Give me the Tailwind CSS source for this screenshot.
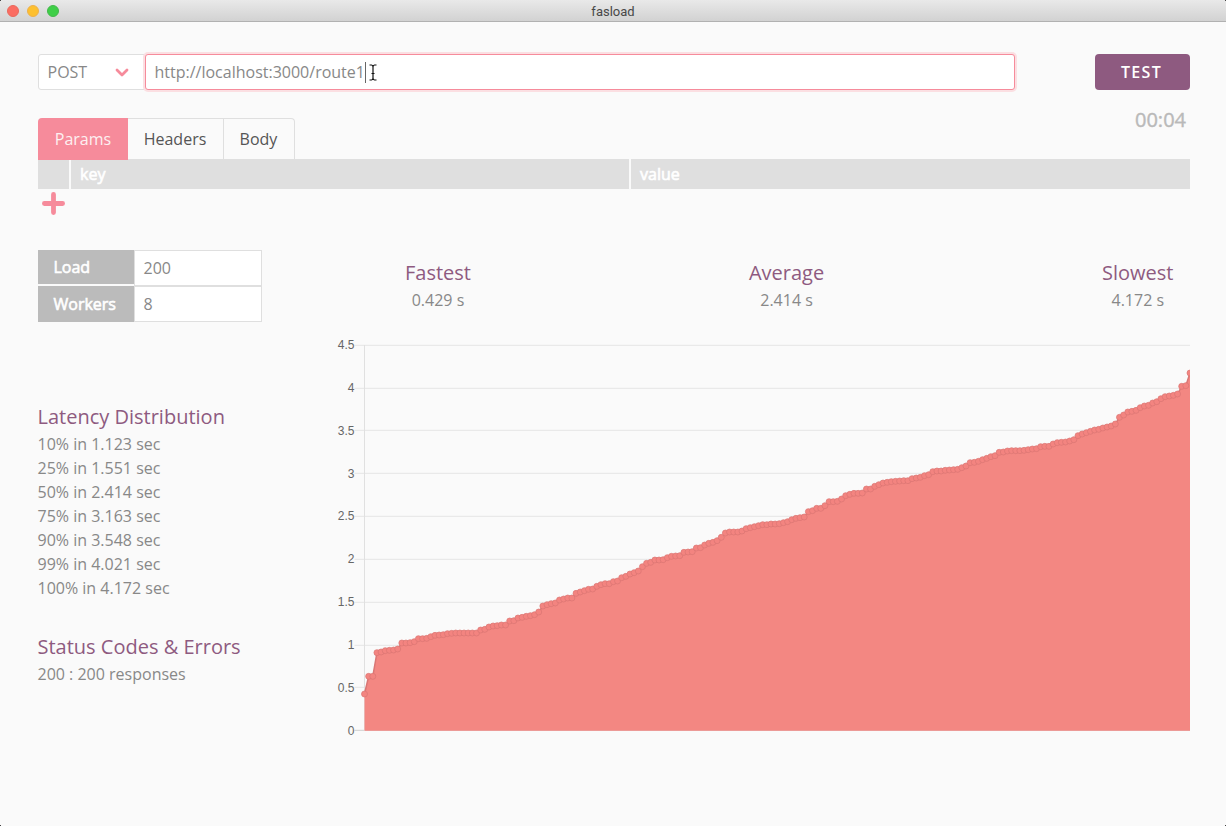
<!DOCTYPE html>
<html lang="en">
<head>
<meta charset="utf-8">
<title>fasload</title>
<script src="https://cdn.jsdelivr.net/npm/@tailwindcss/browser@4"></script>
</head>
<body class="relative w-[1226px] h-[826px] overflow-hidden bg-[#fafafa] font-['Open_Sans',sans-serif] text-base text-[#888] antialiased">
<header class="relative h-[22px] flex items-center justify-center bg-gradient-to-b from-[#e9e9e9] to-[#d2d2d2] border-b border-[#b1b1b1]">
  <div class="absolute left-[7px] top-[5px] flex gap-2">
    <span class="size-3 rounded-full bg-[#fb6d62] border border-[#e9695c]"></span>
    <span class="size-3 rounded-full bg-[#fdc02f] border border-[#eeb04a]"></span>
    <span class="size-3 rounded-full bg-[#3fcf48] border border-[#44b84b]"></span>
  </div>
  <span class="font-['Roboto',sans-serif] text-[13px] text-[#484848] mt-[3px]">fasload</span>
</header>
<main class="px-[38px] pr-9 pt-8">
  <div class="flex h-9">
    <div class="w-[107px] flex items-center justify-between rounded-l-[3px] border border-[#dfdfdf] bg-white pl-[8.5px] pr-[15px]">
      <span>POST</span>
      <svg class="w-[14px] h-[9px]" viewBox="0 0 14 9" fill="none" stroke="#f68b9b" stroke-width="2.8" stroke-linecap="round" stroke-linejoin="round"><path d="M2 2l5 5 5-5"/></svg>
    </div>
    <div class="w-[870px] flex items-center rounded-[3px] border border-[#f68b9b] bg-white pl-[8.5px] shadow-[0_0_0_2px_#fbdfe2]">
      <span>http://localhost:3000/route1</span>
      <span class="w-px h-[21px] bg-[#666]"></span>
      <svg class="ml-[3.5px] mt-px w-[8px] h-[17px]" viewBox="0 0 8 17" fill="none" stroke="#111" stroke-width="1.2"><path d="M.5 1H2.500Q4 1.200 4 3V14Q4 15.800 2.500 16H.5M7.500 1H5.500Q4 1.200 4 3M4 14Q4 15.800 5.500 16H7.500M2.500 9.500H5.500"/></svg>
    </div>
    <button class="ml-20 w-[95px] rounded bg-[#8e5a80] text-white font-semibold tracking-[1.3px] pr-[2px]">TEST</button>
  </div>
  <div class="mt-7 flex justify-between">
    <nav class="flex h-[41px] text-[#555]">
      <div class="w-[90px] h-[42px] -mb-px z-10 flex items-center justify-center rounded-tl bg-[#f68b9b] text-[#fdf0f1]">Params</div>
      <div class="w-[96px] flex items-center justify-center border-t border-r border-[#dfdfdf] pr-px">Headers</div>
      <div class="w-[71px] flex items-center justify-center border-t border-r border-[#dfdfdf] rounded-tr pr-px">Body</div>
    </nav>
    <div class="text-xl leading-none pr-1 text-[#b9b9b9] -mt-[8px] [-webkit-text-stroke:0.4px_#b9b9b9]">00:04</div>
  </div>
  <div class="flex h-[30px] gap-0.5 leading-[31px] text-white [-webkit-text-stroke:0.6px_#fff]">
    <div class="w-[31px] bg-[#dfdfdf]"></div>
    <div class="w-[558px] bg-[#dfdfdf] pl-[9px]">key</div>
    <div class="w-[559px] bg-[#dfdfdf] pl-[9px]">value</div>
  </div>
  <svg class="mt-[3px] ml-1 size-[23px]" viewBox="0 0 23 23" stroke="#f68b9b" stroke-width="4.800" stroke-linecap="round"><path d="M2.400 11.500h18.200M11.500 2.400v18.200"/></svg>
  <div class="mt-[35px] flex">
    <aside class="w-[294px] shrink-0">
      <div class="w-[224px]">
        <div class="flex h-9">
          <div class="w-24 h-[34px] bg-[#bbb] pl-[15.5px] leading-[35px] text-white [-webkit-text-stroke:0.6px_#fff]">Load</div>
          <div class="flex-1 border border-[#dfdfdf] bg-white pl-[8.5px] leading-[35px]">200</div>
        </div>
        <div class="flex h-9">
          <div class="w-24 bg-[#bbb] pl-[15.5px] leading-[36px] text-white [-webkit-text-stroke:0.6px_#fff]">Workers</div>
          <div class="flex-1 border border-[#dfdfdf] bg-white pl-[8.5px] leading-[35px]">8</div>
        </div>
      </div>
      <div class="-ml-[0.5px]">
      <h2 class="mt-20 text-xl leading-[30px] text-[#8e5a80]">Latency Distribution</h2>
      <ul class="leading-6">
        <li>10% in 1.123 sec</li><li>25% in 1.551 sec</li><li>50% in 2.414 sec</li><li>75% in 3.163 sec</li><li>90% in 3.548 sec</li><li>99% in 4.021 sec</li><li>100% in 4.172 sec</li>
      </ul>
      <h2 class="mt-8 text-xl leading-[30px] text-[#8e5a80]">Status Codes &amp; Errors</h2>
      <p class="leading-6">200 : 200 responses</p>
      </div>
    </aside>
    <section class="flex-1 pt-2">
      <div class="flex justify-between pl-[73px] pr-[16.5px] text-center">
        <div><h3 class="text-xl leading-[30px] text-[#8e5a80]">Fastest</h3><p class="leading-6">0.429 s</p></div>
        <div><h3 class="text-xl leading-[30px] text-[#8e5a80]">Average</h3><p class="leading-6">2.414 s</p></div>
        <div><h3 class="text-xl leading-[30px] text-[#8e5a80]">Slowest</h3><p class="leading-6">4.172 s</p></div>
      </div>
      <svg id="chart" class="mt-[23px] block w-[858px] h-[405px]" viewBox="332 335 858 405" font-family="Liberation Sans, sans-serif" font-size="12" fill="#666"></svg>
    </section>
  </div>
</main>
<span class="absolute left-0 top-0 size-px bg-[#444]"></span>
<span class="absolute right-0 top-0 size-px bg-[#444]"></span>
<span class="absolute left-0 bottom-0 size-px bg-[#444]"></span>
<span class="absolute right-0 bottom-0 size-px bg-[#444]"></span>
<script>
const segments = [
  [560, [402,349,349,278,276,272,271,270,267,249,249,248,245,236,236,235,230,226,225,224,221,220,219,219,219,219,219,219,210,208,201,198,197,195,195,183,182,174,172,169,167,164,156,138,134,131,129,120,117,114,114,100,96,92,88,87,79]],
  [440, [434,431,431,425,423,413,409,402,398,393,380,370,367,360,360,359,353,349,348,347,337,336,335,324,323,315,310,307,302,292,279,276,276,276,273,266,263,260,257,254,254,252,252,251,248,245,239,235,233,231,215,212,205,205,197,185,185,184,177,167,163,160,160,159,147,147,139,134,129,127,125,124]],
  [340, [423,422,422,416,414,412,407,404,395,393,393,391,390,389,388,383,378,368,367,364,359,355,350,347,337,336,333,332,332,332,331,329,327,326,320,319,319,312,308,307,306,303,299,287,282,278,274,270,268,264,261,258,252,232,225,216,214,211,203,198,196,189,185,176,170,168,166,162,139,137,99]]
];
const ys = segments.flatMap(([top, list]) => list.map(v => top + v / 3));
const pts = ys.map((y, i) => [364.5 + i * 825.5 / (ys.length - 1), y]);
let out = '';
for (let k = 0; k <= 9; k++) {
  const y = 730.5 - k * 42.83;
  out += `<path d="M354.5 ${Math.round(y - .2) + .3}H1190" stroke="${k ? '#e5e5e5' : '#cfcfcf'}"/><text x="354.500" y="${y + 4}" text-anchor="end">${k / 2}</text>`;
}
out += '<path d="M364.500 345V740" stroke="#e0e0e0" stroke-dasharray="386 20"/>';
const line = pts.map(p => p[0].toFixed(2) + ' ' + p[1].toFixed(2)).join('L');
out += `<path d="M364.500 730.700L${line}V730.700Z" fill="#f38782"/><path d="M${line}" fill="none" stroke="#d97775" stroke-width="1.500"/>`;
out += pts.map(p => `<circle cx="${p[0].toFixed(2)}" cy="${p[1].toFixed(2)}" r="3" fill="#f38480" stroke="#da7673" stroke-width=".7"/>`).join('');
document.getElementById('chart').innerHTML = out;
</script>
</body>
</html>
